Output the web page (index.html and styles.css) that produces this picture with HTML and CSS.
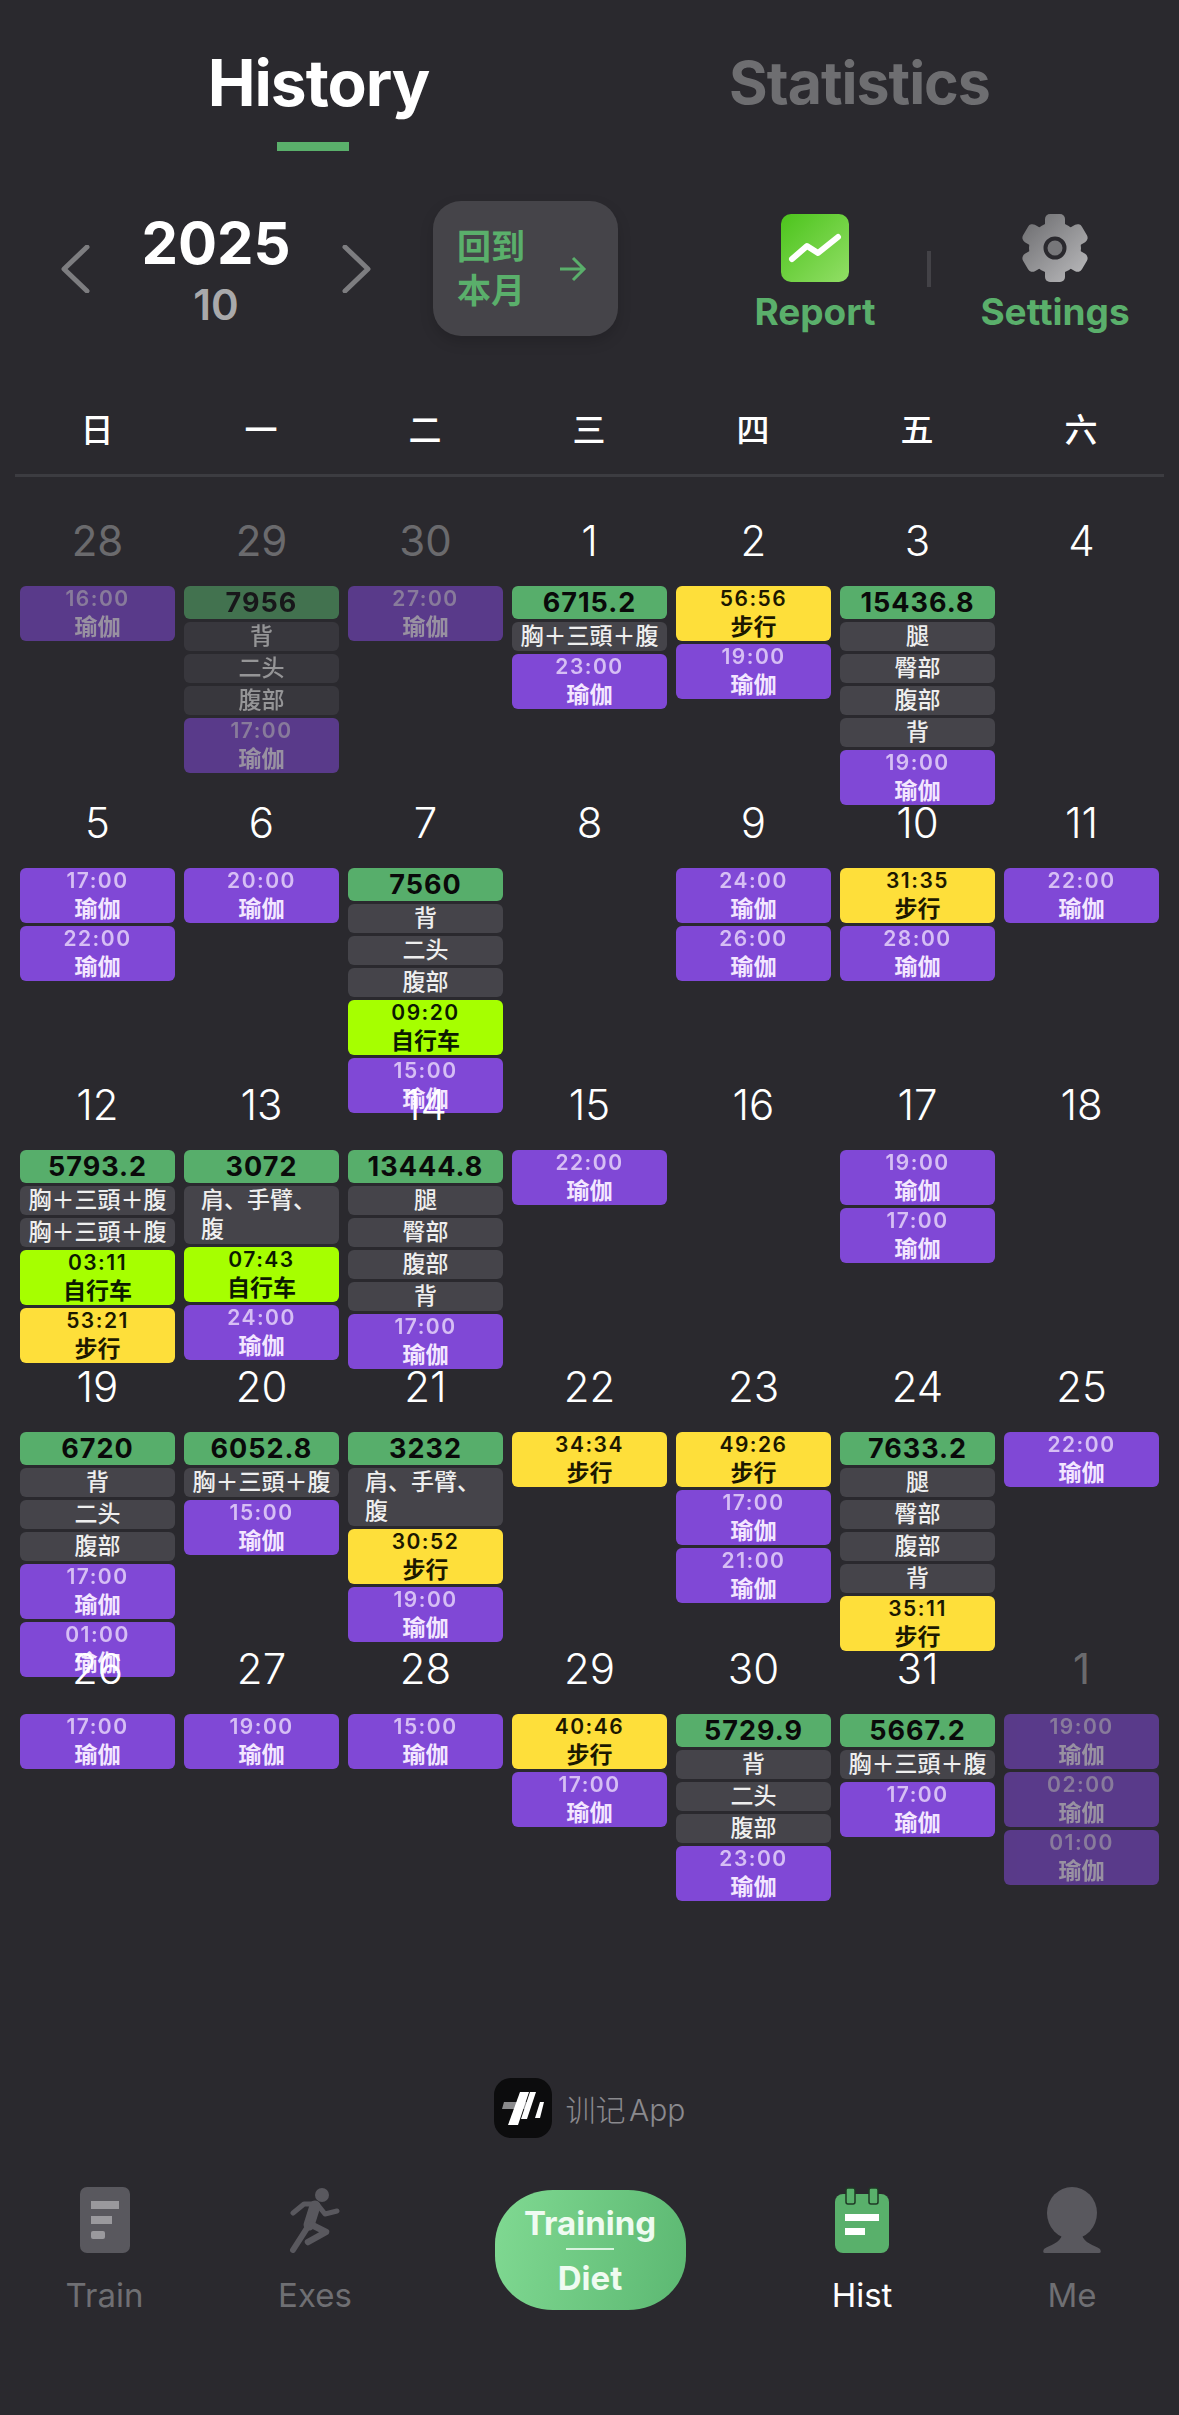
FILE: index.html
```html
<!DOCTYPE html>
<html lang="zh-CN">
<head>
    <meta charset="UTF-8">
    <meta name="viewport" content="width=device-width, initial-scale=1.0">
    <title>History</title>
    <link rel="stylesheet" href="styles.css">
</head>
<body>

    <!-- Abas -->
    <div class="tabs">
        <div class="tab active">History<span class="tab-line"></span></div>
        <div class="tab">Statistics</div>
    </div>

    <!-- Barra do mês -->
    <div class="toolbar">
        <svg class="chevron" viewBox="0 0 30 48"><path d="M27 2 L4 24 L27 46" /></svg>
        <div class="year-box">
            <div class="year">2025</div>
            <div class="month">10</div>
        </div>
        <svg class="chevron" viewBox="0 0 30 48"><path d="M3 2 L26 24 L3 46" /></svg>
        <div class="back-btn">
            <div class="back-text">回到<br>本月</div>
            <svg class="back-arrow" viewBox="0 0 30 30"><path d="M3 15 H26 M16 4 L27 15 L16 26" /></svg>
        </div>
        <div class="tool tool-report">
            <svg class="tool-icon" viewBox="0 0 68 68">
                <defs>
                    <linearGradient id="reportFill" x1="0" y1="0" x2="1" y2="1">
                        <stop offset="0" stop-color="#4cc41c" />
                        <stop offset="1" stop-color="#92de66" />
                    </linearGradient>
                </defs>
                <rect width="68" height="68" rx="10" fill="url(#reportFill)" />
                <path d="M11 45 L26 32 L37 39 L57 23" fill="none" stroke="#fff" stroke-width="6" stroke-linecap="round" stroke-linejoin="round" />
            </svg>
            <span>Report</span>
        </div>
        <div class="tool-sep"></div>
        <div class="tool tool-settings">
            <svg class="tool-icon" viewBox="0 0 68 68">
                <defs>
                    <linearGradient id="gearFill" x1="0" y1="0" x2="1" y2="1">
                        <stop offset="0" stop-color="#69696c" />
                        <stop offset="1" stop-color="#bdbdbf" />
                    </linearGradient>
                    <mask id="gearMask">
                        <circle cx="34" cy="34" r="26" fill="#fff" />
                        <rect x="24" y="0" width="20" height="16" rx="5" fill="#fff" />
                        <rect x="24" y="0" width="20" height="16" rx="5" fill="#fff" transform="rotate(60 34 34)" />
                        <rect x="24" y="0" width="20" height="16" rx="5" fill="#fff" transform="rotate(120 34 34)" />
                        <rect x="24" y="0" width="20" height="16" rx="5" fill="#fff" transform="rotate(180 34 34)" />
                        <rect x="24" y="0" width="20" height="16" rx="5" fill="#fff" transform="rotate(240 34 34)" />
                        <rect x="24" y="0" width="20" height="16" rx="5" fill="#fff" transform="rotate(300 34 34)" />
                    </mask>
                </defs>
                <rect width="68" height="68" fill="url(#gearFill)" mask="url(#gearMask)" />
                <circle cx="34" cy="34" r="9.5" fill="#77777a" stroke="#2a292e" stroke-width="4" />
            </svg>
            <span>Settings</span>
        </div>
    </div>

    <!-- Dias da semana -->
    <div class="week">
        <div>日</div><div>一</div><div>二</div><div>三</div><div>四</div><div>五</div><div>六</div>
    </div>

    <!-- Calendario -->
    <div class="calendar">
        <div class="day other">
            <div class="num">28</div>
            <div class="ev yoga"><b>16:00</b>瑜伽</div>
        </div>
        <div class="day other">
            <div class="num">29</div>
            <div class="ev total">7956</div>
            <div class="ev part">背</div>
            <div class="ev part">二头</div>
            <div class="ev part">腹部</div>
            <div class="ev yoga"><b>17:00</b>瑜伽</div>
        </div>
        <div class="day other">
            <div class="num">30</div>
            <div class="ev yoga"><b>27:00</b>瑜伽</div>
        </div>
        <div class="day">
            <div class="num">1</div>
            <div class="ev total">6715.2</div>
            <div class="ev part">胸＋三頭＋腹</div>
            <div class="ev yoga"><b>23:00</b>瑜伽</div>
        </div>
        <div class="day">
            <div class="num">2</div>
            <div class="ev walk"><b>56:56</b>步行</div>
            <div class="ev yoga"><b>19:00</b>瑜伽</div>
        </div>
        <div class="day">
            <div class="num">3</div>
            <div class="ev total">15436.8</div>
            <div class="ev part">腿</div>
            <div class="ev part">臀部</div>
            <div class="ev part">腹部</div>
            <div class="ev part">背</div>
            <div class="ev yoga"><b>19:00</b>瑜伽</div>
        </div>
        <div class="day">
            <div class="num">4</div>
        </div>

        <div class="day">
            <div class="num">5</div>
            <div class="ev yoga"><b>17:00</b>瑜伽</div>
            <div class="ev yoga"><b>22:00</b>瑜伽</div>
        </div>
        <div class="day">
            <div class="num">6</div>
            <div class="ev yoga"><b>20:00</b>瑜伽</div>
        </div>
        <div class="day">
            <div class="num">7</div>
            <div class="ev total">7560</div>
            <div class="ev part">背</div>
            <div class="ev part">二头</div>
            <div class="ev part">腹部</div>
            <div class="ev bike"><b>09:20</b>自行车</div>
            <div class="ev yoga"><b>15:00</b>瑜伽</div>
        </div>
        <div class="day">
            <div class="num">8</div>
        </div>
        <div class="day">
            <div class="num">9</div>
            <div class="ev yoga"><b>24:00</b>瑜伽</div>
            <div class="ev yoga"><b>26:00</b>瑜伽</div>
        </div>
        <div class="day">
            <div class="num">10</div>
            <div class="ev walk"><b>31:35</b>步行</div>
            <div class="ev yoga"><b>28:00</b>瑜伽</div>
        </div>
        <div class="day">
            <div class="num">11</div>
            <div class="ev yoga"><b>22:00</b>瑜伽</div>
        </div>

        <div class="day">
            <div class="num">12</div>
            <div class="ev total">5793.2</div>
            <div class="ev part">胸＋三頭＋腹</div>
            <div class="ev part">胸＋三頭＋腹</div>
            <div class="ev bike"><b>03:11</b>自行车</div>
            <div class="ev walk"><b>53:21</b>步行</div>
        </div>
        <div class="day">
            <div class="num">13</div>
            <div class="ev total">3072</div>
            <div class="ev part part-wrap">肩、手臂、<br>腹</div>
            <div class="ev bike"><b>07:43</b>自行车</div>
            <div class="ev yoga"><b>24:00</b>瑜伽</div>
        </div>
        <div class="day">
            <div class="num">14</div>
            <div class="ev total">13444.8</div>
            <div class="ev part">腿</div>
            <div class="ev part">臀部</div>
            <div class="ev part">腹部</div>
            <div class="ev part">背</div>
            <div class="ev yoga"><b>17:00</b>瑜伽</div>
        </div>
        <div class="day">
            <div class="num">15</div>
            <div class="ev yoga"><b>22:00</b>瑜伽</div>
        </div>
        <div class="day">
            <div class="num">16</div>
        </div>
        <div class="day">
            <div class="num">17</div>
            <div class="ev yoga"><b>19:00</b>瑜伽</div>
            <div class="ev yoga"><b>17:00</b>瑜伽</div>
        </div>
        <div class="day">
            <div class="num">18</div>
        </div>

        <div class="day">
            <div class="num">19</div>
            <div class="ev total">6720</div>
            <div class="ev part">背</div>
            <div class="ev part">二头</div>
            <div class="ev part">腹部</div>
            <div class="ev yoga"><b>17:00</b>瑜伽</div>
            <div class="ev yoga"><b>01:00</b>瑜伽</div>
        </div>
        <div class="day">
            <div class="num">20</div>
            <div class="ev total">6052.8</div>
            <div class="ev part">胸＋三頭＋腹</div>
            <div class="ev yoga"><b>15:00</b>瑜伽</div>
        </div>
        <div class="day">
            <div class="num">21</div>
            <div class="ev total">3232</div>
            <div class="ev part part-wrap">肩、手臂、<br>腹</div>
            <div class="ev walk"><b>30:52</b>步行</div>
            <div class="ev yoga"><b>19:00</b>瑜伽</div>
        </div>
        <div class="day">
            <div class="num">22</div>
            <div class="ev walk"><b>34:34</b>步行</div>
        </div>
        <div class="day">
            <div class="num">23</div>
            <div class="ev walk"><b>49:26</b>步行</div>
            <div class="ev yoga"><b>17:00</b>瑜伽</div>
            <div class="ev yoga"><b>21:00</b>瑜伽</div>
        </div>
        <div class="day">
            <div class="num">24</div>
            <div class="ev total">7633.2</div>
            <div class="ev part">腿</div>
            <div class="ev part">臀部</div>
            <div class="ev part">腹部</div>
            <div class="ev part">背</div>
            <div class="ev walk"><b>35:11</b>步行</div>
        </div>
        <div class="day">
            <div class="num">25</div>
            <div class="ev yoga"><b>22:00</b>瑜伽</div>
        </div>

        <div class="day">
            <div class="num">26</div>
            <div class="ev yoga"><b>17:00</b>瑜伽</div>
        </div>
        <div class="day">
            <div class="num">27</div>
            <div class="ev yoga"><b>19:00</b>瑜伽</div>
        </div>
        <div class="day">
            <div class="num">28</div>
            <div class="ev yoga"><b>15:00</b>瑜伽</div>
        </div>
        <div class="day">
            <div class="num">29</div>
            <div class="ev walk"><b>40:46</b>步行</div>
            <div class="ev yoga"><b>17:00</b>瑜伽</div>
        </div>
        <div class="day">
            <div class="num">30</div>
            <div class="ev total">5729.9</div>
            <div class="ev part">背</div>
            <div class="ev part">二头</div>
            <div class="ev part">腹部</div>
            <div class="ev yoga"><b>23:00</b>瑜伽</div>
        </div>
        <div class="day">
            <div class="num">31</div>
            <div class="ev total">5667.2</div>
            <div class="ev part">胸＋三頭＋腹</div>
            <div class="ev yoga"><b>17:00</b>瑜伽</div>
        </div>
        <div class="day other">
            <div class="num">1</div>
            <div class="ev yoga"><b>19:00</b>瑜伽</div>
            <div class="ev yoga"><b>02:00</b>瑜伽</div>
            <div class="ev yoga"><b>01:00</b>瑜伽</div>
        </div>
    </div>

    <!-- Marca -->
    <div class="brand">
        <svg class="brand-logo" viewBox="0 0 58 60">
            <rect width="58" height="60" rx="17" fill="#0c0c0d" />
            <path d="M10 24 H33 L31 31 H8 Z" fill="#8a8a8c" />
            <path d="M17 47 L14 47 L26 14 L35 14 L24 47 Z" fill="#fff" />
            <path d="M33 41 L27 41 L36 14 L42 14 Z" fill="#fff" />
            <path d="M46 40 L41 40 L46 24 L50 24 Z" fill="#fff" />
        </svg>
        <span>训记 App</span>
    </div>

    <!-- Navegação -->
    <div class="nav">
        <div class="nav-item">
            <svg class="nav-icon" viewBox="0 0 50 66">
                <rect width="50" height="66" rx="7" fill="#59585e" />
                <rect x="11" y="14" width="28" height="8" fill="#9a999d" />
                <rect x="11" y="29" width="21" height="8" fill="#9a999d" />
                <rect x="11" y="44" width="14" height="8" rx="2" fill="#9a999d" />
            </svg>
            <span>Train</span>
        </div>
        <div class="nav-item">
            <svg class="nav-icon" viewBox="0 0 50 66">
                <circle cx="32" cy="8" r="7" fill="#59585e" />
                <path d="M3 26 L14 17 H27 L35 27 L47 24" fill="none" stroke="#59585e" stroke-width="5" stroke-linecap="round" stroke-linejoin="round" />
                <path d="M25 19 L19 38" fill="none" stroke="#59585e" stroke-width="11" stroke-linecap="round" />
                <path d="M19 38 L3 63" fill="none" stroke="#59585e" stroke-width="6" stroke-linecap="round" />
                <path d="M22 38 L36 45 L18 55" fill="none" stroke="#59585e" stroke-width="6.5" stroke-linecap="round" stroke-linejoin="round" />
            </svg>
            <span>Exes</span>
        </div>
        <div class="nav-main">
            <div>Training</div>
            <div class="nav-main-line"></div>
            <div>Diet</div>
        </div>
        <div class="nav-item nav-on">
            <svg class="nav-icon" viewBox="0 0 54 66">
                <rect y="7" width="54" height="59" rx="8" fill="#59b06b" />
                <rect x="11" y="1" width="9" height="16" rx="2" fill="#59b06b" stroke="#1f3a26" stroke-width="1.5" />
                <rect x="34" y="1" width="9" height="16" rx="2" fill="#59b06b" stroke="#1f3a26" stroke-width="1.5" />
                <rect x="10" y="27" width="34" height="7" fill="#fff" />
                <rect x="10" y="41" width="20" height="7" fill="#fff" />
            </svg>
            <span>Hist</span>
        </div>
        <div class="nav-item">
            <svg class="nav-icon" viewBox="0 0 60 66">
                <ellipse cx="30" cy="26" rx="25" ry="26" fill="#59585e" />
                <path d="M20 48 H40 C42 56 52 58 58 62 Q60 66 57 66 H3 Q0 66 2 62 C8 58 18 56 20 48 Z" fill="#59585e" />
            </svg>
            <span>Me</span>
        </div>
    </div>

</body>
</html>
```
FILE: styles.css
```css
/* Reset */
* {
    margin: 0;
    padding: 0;
    box-sizing: border-box;
}

body {
    width: 1179px;
    height: 2415px;
    overflow: hidden;
    background-color: #2a292e;
    color: #fff;
    font-family: "Inter", "Noto Sans CJK SC", sans-serif;
}

/* Abas */
.tabs {
    display: grid;
    grid-template-columns: 541px 541px;
    padding: 47px 49px 0 48px;
    height: 201px;
}

.tab {
    display: flex;
    flex-direction: column;
    align-items: center;
    font-size: 59px;
    line-height: 72px;
    font-weight: 700;
    letter-spacing: -1px;
    color: #6e6e71;
}

.tab.active {
    color: #fff;
    font-size: 64px;
}

.tab-line {
    width: 72px;
    height: 9px;
    margin-top: 23px;
    margin-right: 12px;
    background-color: #5aaf6b;
}

/* Barra do mês */
.toolbar {
    display: flex;
    align-items: center;
    height: 135px;
    padding-left: 60px;
}

.chevron {
    width: 30px;
    height: 48px;
    flex: none;
}

.chevron path {
    fill: none;
    stroke: #7d7d80;
    stroke-width: 5;
    stroke-linecap: round;
    stroke-linejoin: round;
}

.year-box {
    width: 252px;
    padding-top: 2px;
    text-align: center;
}

.year {
    font-size: 58px;
    line-height: 66px;
    font-weight: 700;
}

.month {
    margin-top: 4px;
    font-size: 42px;
    line-height: 50px;
    font-weight: 600;
    color: #a9a9ab;
}

.back-btn {
    display: flex;
    align-items: center;
    width: 185px;
    height: 135px;
    margin-left: 61px;
    padding-left: 24px;
    border-radius: 28px;
    background-color: #454449;
    box-shadow: 0 6px 14px rgba(0, 0, 0, 0.15);
    color: #5aaf6b;
}

.back-text {
    font-size: 34px;
    line-height: 44px;
    font-weight: 600;
}

.back-arrow {
    width: 30px;
    height: 30px;
    margin-left: 32px;
}

.back-arrow path {
    fill: none;
    stroke: #5aaf6b;
    stroke-width: 3;
}

.tool {
    display: flex;
    flex-direction: column;
    align-items: center;
    width: 180px;
    padding-top: 9px;
    color: #5aaf6b;
    font-size: 37px;
    line-height: 42px;
    font-weight: 700;
}

.tool-report {
    margin-left: 107px;
}

.tool-settings {
    margin-left: 34px;
}

.tool-icon {
    width: 68px;
    height: 68px;
    margin-bottom: 9px;
}

.tool-sep {
    width: 4px;
    height: 36px;
    margin-left: 22px;
    background-color: #434247;
}

/* Dias da semana */
.week {
    display: grid;
    grid-template-columns: repeat(7, 164px);
    height: 141px;
    margin: 0 15px;
    padding: 72px 0 0 0;
    border-bottom: 3px solid #3c3c41;
    text-align: center;
    font-size: 33px;
    line-height: 44px;
    font-weight: 500;
}

/* Calendario */
.calendar {
    display: grid;
    grid-template-columns: repeat(7, 155px);
    grid-auto-rows: 282px;
    column-gap: 9px;
    padding: 38px 0 0 20px;
    height: 1448px;
}

.day {
    display: flex;
    flex-direction: column;
    gap: 3px;
}

.num {
    flex: none;
    height: 68px;
    text-align: center;
    font-size: 42px;
    line-height: 52px;
    font-weight: 300;
}

.day.other .num {
    color: #6a6a6d;
    font-weight: 400;
}

.day.other .ev {
    opacity: 0.55;
}

.ev {
    flex: none;
    border-radius: 6px;
    text-align: center;
    font-size: 23px;
    line-height: 29px;
    font-weight: 600;
}

.ev b {
    display: block;
    height: 27px;
    font-size: 21px;
    line-height: 25px;
    font-weight: 600;
    letter-spacing: 1.5px;
    opacity: 0.75;
}

.total {
    height: 33px;
    background-color: #57ae6b;
    color: #0a0a0a;
    font-size: 27px;
    line-height: 33px;
    font-weight: 700;
    letter-spacing: 1px;
}

.part {
    min-height: 29px;
    background-color: #45444a;
    color: #eee;
    font-weight: 500;
}

.part-wrap {
    padding-left: 17px;
    text-align: left;
}

.yoga {
    height: 55px;
    background-color: #8048d6;
    color: #f3e6ff;
}

.bike {
    height: 55px;
    background-color: #a6ff00;
    color: #0c1a00;
}

.bike b {
    opacity: 1;
}

.walk {
    height: 55px;
    background-color: #fedf3a;
    color: #1c1800;
}

.walk b {
    opacity: 1;
}

/* Marca */
.brand {
    display: flex;
    align-items: center;
    justify-content: center;
    gap: 14px;
    height: 60px;
    margin-top: 153px;
    color: #8a8a8e;
    font-size: 30px;
    font-weight: 300;
    word-spacing: -5px;
}

.brand-logo {
    width: 58px;
    height: 60px;
}

/* Navegação */
.nav {
    display: grid;
    grid-template-columns: 209px 212px 338px 206px 214px;
    margin-top: 49px;
}

.nav-item {
    display: flex;
    flex-direction: column;
    align-items: center;
    color: #6f6f73;
    font-size: 33px;
    line-height: 40px;
}

.nav-icon {
    height: 66px;
    margin-bottom: 22px;
}

.nav-on {
    color: #fff;
}

.nav-main {
    display: flex;
    flex-direction: column;
    align-items: center;
    justify-content: center;
    justify-self: center;
    width: 191px;
    height: 120px;
    margin-top: 3px;
    border-radius: 58px / 54px;
    background: linear-gradient(100deg, #80d992, #5cb872);
    color: #effbf1;
    font-size: 33px;
    line-height: 40px;
    font-weight: 700;
}

.nav-main-line {
    width: 48px;
    height: 2px;
    margin: 5px 0 8px;
    background-color: #d8f3de;
}
```
